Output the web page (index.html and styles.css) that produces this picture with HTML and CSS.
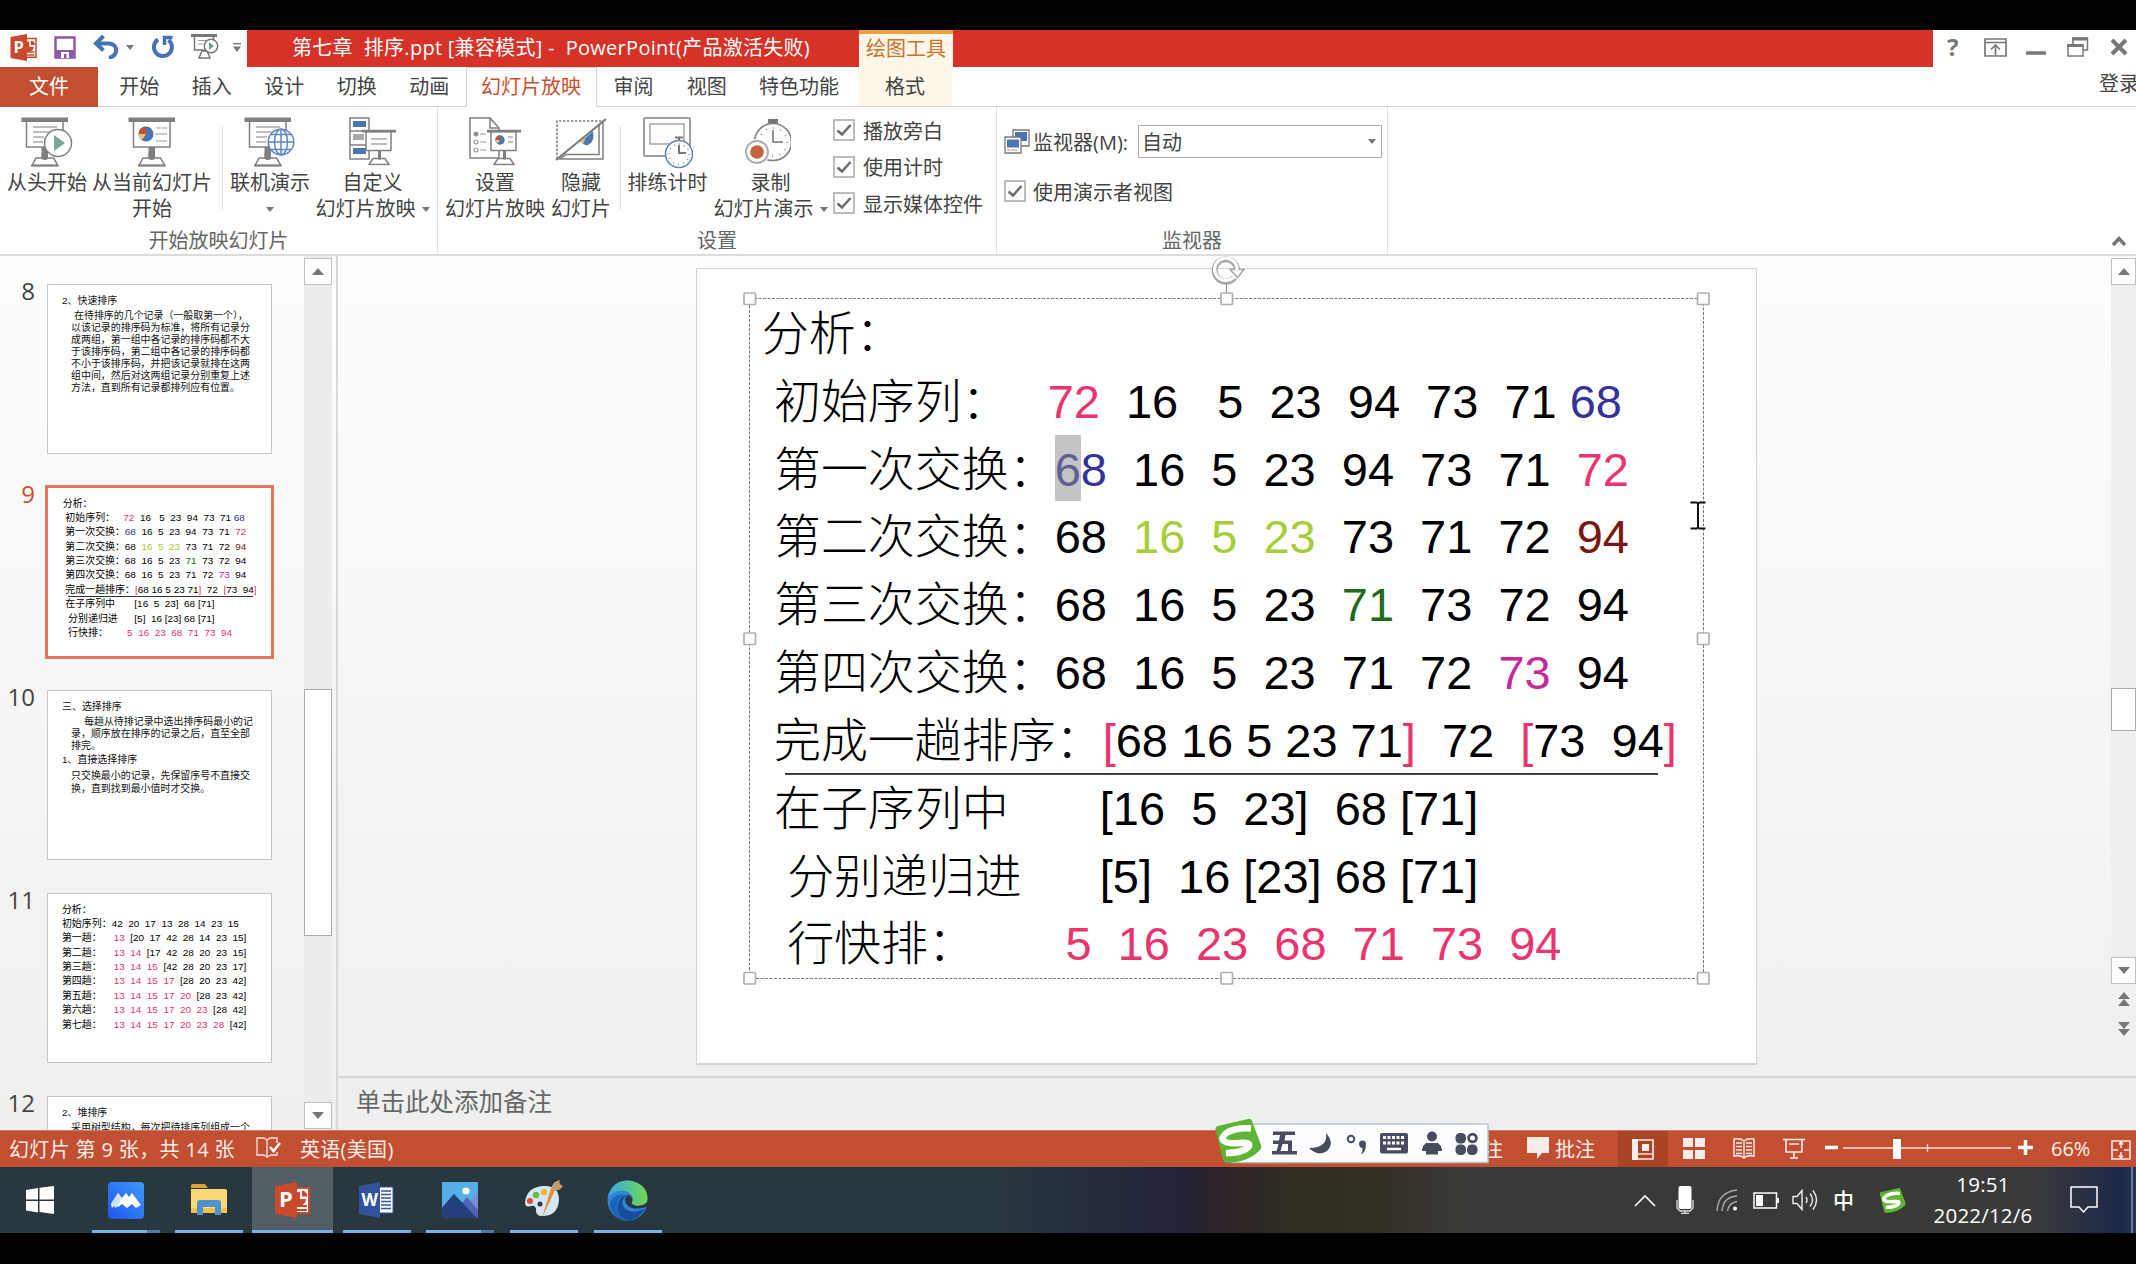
FILE: index.html
```html
<!DOCTYPE html>
<html lang="zh-CN">
<head>
<meta charset="utf-8">
<title>第七章 排序.ppt - PowerPoint</title>
<link rel="stylesheet" href="styles.css">
</head>
<body>
<svg class="defs" width="0" height="0">
  <symbol id="easel" viewBox="0 0 48 50">
    <rect x="5.500" y="4" width="36.500" height="26" fill="#fff" stroke="#808080" stroke-width="1.500"/>
    <rect x="0.500" y="0.500" width="46.500" height="4.500" fill="#808080"/>
    <path d="M20.500 30h6.500v11h-6.500z" fill="#808080"/>
    <path d="M15 41h17.500l4.500 7.500h-26z" fill="#fff" stroke="#808080" stroke-width="1.500"/>
    <path d="M10 48.500h27" stroke="#808080" stroke-width="2"/>
    <path d="M20.500 36h6.500v6q-3 2-6.500 0z" fill="#808080"/>
  </symbol>
  <symbol id="small-easel" viewBox="0 0 34 36">
    <rect x="4" y="2" width="25" height="19" fill="#fff" stroke="#808080" stroke-width="1.500"/>
    <rect x="0" y="0" width="34" height="3" fill="#808080"/>
    <path d="M16 21h3v9h-3z" fill="#808080"/>
    <path d="M11 29h12l4 6H7z" fill="#fff" stroke="#808080" stroke-width="1.500"/>
    <path d="M16 21h3v9h-3z" fill="#808080"/>
  </symbol>
  <symbol id="pie" viewBox="0 0 16 16">
    <circle cx="8" cy="8" r="7.500" fill="#4a74b4"/>
    <path d="M8 8V.5A7.500 7.500 0 0 0 .5 8z" fill="#c0502f"/>
    <path d="M8 8H.5A7.500 7.500 0 0 0 4 14z" fill="#ecc37a"/>
  </symbol>
  <symbol id="check" viewBox="0 0 22 22">
    <rect x="1" y="1" width="20" height="20" fill="#fff" stroke="#adadad" stroke-width="1.600"/>
    <path d="M4.500 11.500l4.500 4L17.500 6" fill="none" stroke="#6c6c6c" stroke-width="2.600"/>
  </symbol>
  <symbol id="sogou" viewBox="0 0 48 46">
    <path d="M4 8Q1 9 1.500 12L9 42q1 3 4 3 22-1 33-13 2-2 1-5L38 3q-1-3-4-2z" fill="#5db534"/>
    <path d="M37 10.500Q24 9 14 14q-8 5-4 9 4 3 16 2 11-1 9 3-5 7-23 7" fill="none" stroke="#fff" stroke-width="6.500"/>
  </symbol>
  <symbol id="ppt" viewBox="0 0 36 36">
    <path d="M20 6h14v25H20z" fill="#fff" stroke="#c8492b" stroke-width="2"/>
    <path d="M25 10v7h6a7 7 0 1 1-6-7z" fill="#c8492b"/><path d="M27 8.500a6 6 0 0 1 5.500 6H27z" fill="#c8492b"/>
    <path d="M21 24h11M21 28h11" stroke="#c8492b" stroke-width="1.800"/>
    <path d="M0 4L22 0v36L0 32z" fill="#c8492b"/>
    <text x="4" y="25" class="logo-letter">P</text>
  </symbol>
</svg>

<div class="screen">
  <header class="titlebar">
    <div class="qat">
      <svg width="28" height="27"><use href="#ppt" width="28" height="27"/></svg>
      <svg class="m-save" width="22" height="23" viewBox="0 0 22 23"><path d="M1.500 1.500h19v20h-19z" fill="#fff" stroke="#8a58ad" stroke-width="2.500"/><path d="M1 14h20v8H1z" fill="#8a58ad"/><path d="M7 16h8v6h-2.500v-4H10v4H7z" fill="#fff"/></svg>
      <svg class="m-undo" width="26" height="24" viewBox="0 0 26 24"><path d="M3 8.500h13q8 1 7 8-1 5-7 6.500" fill="none" stroke="#4673b3" stroke-width="4"/><path d="M10.500 1L3 8.500l7.500 7" fill="none" stroke="#4673b3" stroke-width="4"/></svg>
      <svg class="m-ar1" width="8" height="5"><path d="M0 0h8L4 5z" fill="#777"/></svg>
      <svg class="m-redo" width="24" height="24" viewBox="0 0 24 24"><path d="M7 4.500A9 9 0 1 0 17.500 5" fill="none" stroke="#4673b3" stroke-width="4"/><path d="M13.500 10V2.500h8" fill="none" stroke="#4673b3" stroke-width="3.500"/></svg>
      <svg class="m-show" width="28" height="26" viewBox="0 0 28 26"><path d="M3.500 2v14h19V2M8 24l3-7h5l3 7z" fill="#fff" stroke="#777" stroke-width="1.500"/><path d="M0 1.500h26" stroke="#777" stroke-width="3"/><path d="M7 6.500h9M7 10h5" stroke="#999"/><circle cx="20" cy="12" r="6.700" fill="#fff" stroke="#777" stroke-width="1.500"/><path d="M18 8v8l5-4z" fill="#6da287"/></svg>
      <svg class="m-ar2" width="8" height="9"><path d="M0 .7h8" stroke="#777" stroke-width="1.400"/><path d="M0 3.500h8L4 9z" fill="#777"/></svg>
    </div>
    <div class="caption">
      <span class="doc-title">第七章&nbsp; 排序.ppt [兼容模式] -&nbsp; PowerPoint(产品激活失败)</span>
      <span class="tool-tab">绘图工具</span>
    </div>
    <div class="win-controls">
      <span class="help">?</span>
      <svg class="w-rib" width="23" height="19" viewBox="0 0 23 19"><path d="M1 1h21v17H1zM1 4.500h21M11.500 18V7M7 11.500L11.500 7l4.500 4.500" fill="none" stroke="#777" stroke-width="1.700"/></svg>
      <svg class="w-min" width="20" height="4"><path d="M0 2h20" stroke="#777" stroke-width="3.500"/></svg>
      <svg class="w-res" width="22" height="20" viewBox="0 0 22 20"><path d="M6 7V1h14.500v12H16" fill="none" stroke="#777" stroke-width="1.500"/><path d="M5 2h16" stroke="#777" stroke-width="3"/><path d="M1 8h15v11H1z" fill="#fff" stroke="#777" stroke-width="1.500"/><path d="M0 8.500h16.500" stroke="#777" stroke-width="3"/></svg>
      <svg class="w-close" width="18" height="18" viewBox="0 0 18 18"><path d="M2 2l14 14M16 2L2 16" stroke="#777" stroke-width="4"/></svg>
    </div>
  </header>

  <nav class="tabs">
    <span class="tab file">文件</span><span class="tab">开始</span><span class="tab">插入</span><span class="tab">设计</span><span class="tab">切换</span><span class="tab">动画</span><span class="tab active">幻灯片放映</span><span class="tab rev">审阅</span><span class="tab">视图</span><span class="tab feat">特色功能</span><span class="tab format">格式</span>
    <span class="signin">登录</span>
  </nav>

  <section class="ribbon">
    <div class="group g-start">
      <div class="tools">
        <div class="btn b1">
          <svg width="52" height="50" viewBox="0 0 52 50"><use href="#easel" width="48" height="50"/><path d="M12 10h24M12 15h18M12 20h11M12 25h10" stroke="#aaa" stroke-width="1.500"/><circle cx="37" cy="26" r="13.500" fill="#fff" stroke="#808080" stroke-width="1.500"/><path d="M33 18v16l11-8z" fill="#7aa892"/></svg>
          <span>从头开始</span></div>
        <div class="btn b2">
          <svg width="48" height="50" viewBox="0 0 48 50"><use href="#easel" width="48" height="50"/><use href="#pie" x="10" y="9" width="16" height="16"/><path d="M28 11h5M34 11h5M27 17h12M28 24h11" stroke="#999" stroke-width="1.200"/></svg>
          <span>从当前幻灯片</span><span>开始</span></div>
        <i class="sep"></i>
        <div class="btn b3">
          <svg width="52" height="50" viewBox="0 0 52 50"><use href="#easel" width="48" height="50"/><path d="M12 10h24M12 15h18M12 20h11M12 25h10" stroke="#aaa" stroke-width="1.500"/><g fill="#fff" stroke="#5b87c4" stroke-width="1.500"><circle cx="37" cy="25" r="12.800"/><ellipse cx="37" cy="25" rx="6.500" ry="12.800"/><path d="M24 25h26M37 12v26M27 17.500h20M27 32.500h20"/></g></svg>
          <span>联机演示</span><span><b class="down"></b></span></div>
        <div class="btn b4">
          <svg width="50" height="50" viewBox="0 0 50 50"><g fill="#fff" stroke="#808080" stroke-width="1.500"><path d="M2 1h19v41H2zM2 14h19M2 28h19"/></g><path d="M5 4h13v6H5zM5 31h13v6H5z" fill="#4a78b5"/><path d="M5 17h11v6H5z" fill="#aaa"/><use href="#small-easel" x="14" y="12.500" width="34" height="36"/><path d="M23 22h16M23 27h16" stroke="#aaa" stroke-width="1.300"/></svg>
          <span>自定义</span><span>幻灯片放映<b class="down gap"></b></span></div>
      </div>
      <div class="group-name">开始放映幻灯片</div>
    </div>
    <div class="group g-setup">
      <div class="tools">
        <div class="btn b5">
          <svg width="54" height="50" viewBox="0 0 54 50"><path d="M2 1h20l9 10v30H2z" fill="#fff" stroke="#808080" stroke-width="1.500"/><path d="M22 1v10h9" fill="none" stroke="#808080" stroke-width="1.500"/><g fill="#fff" stroke="#999" stroke-width="1.200"><circle cx="8" cy="17" r="2" fill="#888"/><circle cx="8" cy="25" r="2"/><circle cx="8" cy="33" r="2"/><path d="M12 17h6M12 25h6M12 33h6"/></g><use href="#small-easel" x="19" y="12.500" width="34" height="36"/><use href="#pie" x="27" y="18" width="10" height="10"/><path d="M40 20h5M40 25h5" stroke="#aaa" stroke-width="1.300"/></svg>
          <span>设置</span><span>幻灯片放映</span></div>
        <div class="btn b6">
          <svg width="52" height="50" viewBox="0 0 52 50"><path d="M2 42V4h46" fill="none" stroke="#808080" stroke-width="1.600" stroke-dasharray="2.500 1.500"/><path d="M48 4v38H5l6-4.500h33V8" fill="none" stroke="#808080" stroke-width="1.500"/><path d="M26 25l12-11q2 11-5 14-4 1-7-3z" fill="#4a74b4"/><path d="M25 25l3-4 2 2-2 4z" fill="#ecc37a"/><path d="M1 43L51 2" stroke="#777" stroke-width="2"/></svg>
          <span>隐藏</span><span>幻灯片</span></div>
        <i class="sep"></i>
        <div class="btn b7">
          <svg width="50" height="52" viewBox="0 0 50 52"><rect x="1" y="1" width="46" height="38" rx="1" fill="#fff" stroke="#808080" stroke-width="1.500"/><rect x="7" y="7" width="34" height="20" fill="#fff" stroke="#999" stroke-width="1.300"/><circle cx="36" cy="37" r="13.500" fill="#fff" stroke="#5b87c4" stroke-width="1.600"/><circle cx="36" cy="37" r="10" fill="none" stroke="#999" stroke-width="1.500" stroke-dasharray="1 4.200"/><path d="M32 20.500h8M36 20v4M36 28v8h7" fill="none" stroke="#777" stroke-width="2"/></svg>
          <span>排练计时</span></div>
        <div class="btn b8">
          <svg width="50" height="50" viewBox="0 0 50 50"><circle cx="32" cy="25" r="18.500" fill="#fff" stroke="#808080" stroke-width="1.600"/><circle cx="32" cy="25" r="14" fill="none" stroke="#999" stroke-width="1.800" stroke-dasharray="1 6.300"/><path d="M27 4h10M32 3v4" stroke="#777" stroke-width="4"/><path d="M32 13v12h10" fill="none" stroke="#777" stroke-width="1.600"/><circle cx="16" cy="35" r="13" fill="#fff"/><circle cx="16" cy="35" r="11" fill="#fff" stroke="#aaa" stroke-width="1.800"/><circle cx="16" cy="35" r="6.800" fill="#c7623f"/></svg>
          <span>录制</span><span>幻灯片演示<b class="down gap"></b></span></div>
        <div class="checks">
          <label><svg width="22" height="22"><use href="#check"/></svg>播放旁白</label>
          <label><svg width="22" height="22"><use href="#check"/></svg>使用计时</label>
          <label><svg width="22" height="22"><use href="#check"/></svg>显示媒体控件</label>
        </div>
      </div>
      <div class="group-name">设置</div>
    </div>
    <div class="group g-mon">
      <div class="mon-body">
        <div class="mon-row">
          <svg width="26" height="25" viewBox="0 0 26 25"><g stroke="#777" stroke-width="1.300"><path d="M9 1h16v16H9z" fill="#fff"/><path d="M11 3h12v9H11z" fill="#4a74b4" stroke="none"/><path d="M1 8h16v16H1z" fill="#fff"/></g><path d="M3 10.500h12v8H3z" fill="#4a74b4"/><path d="M3 21h3" stroke="#e06c50"/><path d="M7 21h6" stroke="#999"/></svg>
          <span class="mon-label">监视器(M):</span>
          <span class="combo">自动<b class="down"></b></span>
        </div>
        <label class="mon-check"><svg width="22" height="22"><use href="#check"/></svg>使用演示者视图</label>
      </div>
      <div class="group-name">监视器</div>
    </div>
    <svg class="collapse" width="16" height="12" viewBox="0 0 16 12"><path d="M2 10l6-6.500L14 10" fill="none" stroke="#777" stroke-width="3.500"/></svg>
  </section>

  <main class="work">
    <aside class="panel">
      <div class="thumbs">
        <div class="thumb-row"><span class="num">8</span>
          <div class="thumb prose">
            <p class="t">2、快速排序</p>
            <p class="first">在待排序的几个记录（一般取第一个），</p>
            <p>以该记录的排序码为标准，将所有记录分</p><p>成两组，第一组中各记录的排序码都不大</p><p>于该排序码，第二组中各记录的排序码都</p><p>不小于该排序码，并把该记录就排在这两</p><p>组中间，然后对这两组记录分别重复上述</p><p>方法，直到所有记录都排列应有位置。</p>
          </div></div>
        <div class="thumb-row"><span class="num cur">9</span>
          <div class="thumb selected">
            <div class="slide-text">
              <div class="ln head"><span class="lb">分析：</span></div>
              <div class="ln"><span class="lb n1">初始序列：</span><span><em class="pk">72</em>  16   5  23  94  73  71 <em class="bl">68</em></span></div>
              <div class="ln"><span class="lb">第一次交换：</span><span><em class="bl">68</em>  16  5  23  94  73  71  <em class="pk">72</em></span></div>
              <div class="ln"><span class="lb">第二次交换：</span><span>68  <em class="lg">16  5  23</em>  73  71  72  <em class="dr">94</em></span></div>
              <div class="ln"><span class="lb">第三次交换：</span><span>68  16  5  23  <em class="gr">71</em>  73  72  94</span></div>
              <div class="ln"><span class="lb">第四次交换：</span><span>68  16  5  23  71  72  <em class="mg">73</em>  94</span></div>
              <div class="ln rule"><span class="lb n6">完成一趟排序：</span><span><em class="pk">[</em>68 16 5 23 71<em class="pk">]</em>  72  <em class="pk">[</em>73  94<em class="pk">]</em></span></div>
              <div class="ln"><span class="lb n7">在子序列中</span><span>[16  5  23]  68 [71]</span></div>
              <div class="ln in"><span class="lb n8">分别递归进</span><span>[5]  16 [23] 68 [71]</span></div>
              <div class="ln in"><span class="lb n9">行快排：</span><span class="pk">5  16  23  68  71  73  94</span></div>
            </div>
          </div></div>
        <div class="thumb-row"><span class="num">10</span>
          <div class="thumb prose">
            <p class="t">三、选择排序</p>
            <p class="first deep">每趟从待排记录中选出排序码最小的记</p><p>录，顺序放在排序的记录之后，直至全部</p><p>排完。</p>
            <p class="t sub">1、直接选择排序</p>
            <p class="wide">只交换最小的记录，先保留序号不直接交</p><p class="wide">换，直到找到最小值时才交换。</p>
          </div></div>
        <div class="thumb-row"><span class="num">11</span>
          <div class="thumb">
            <div class="slide-text passes">
              <div class="ln"><span class="lb">分析：</span></div>
              <div class="ln"><span class="lb p1">初始序列：</span><span>42  20  17  13  28  14  23  15</span></div>
              <div class="ln"><span class="lb">第一趟：</span><span><em class="pk">13</em>  [20  17  42  28  14  23  15]</span></div>
              <div class="ln"><span class="lb">第二趟：</span><span><em class="pk">13  14</em>  [17  42  28  20  23  15]</span></div>
              <div class="ln"><span class="lb">第三趟：</span><span><em class="pk">13  14  15</em>  [42  28  20  23  17]</span></div>
              <div class="ln"><span class="lb">第四趟：</span><span><em class="pk">13  14  15  17</em>  [28  20  23  42]</span></div>
              <div class="ln"><span class="lb">第五趟：</span><span><em class="pk">13  14  15  17  20</em>  [28  23  42]</span></div>
              <div class="ln"><span class="lb">第六趟：</span><span><em class="pk">13  14  15  17  20  23</em>  [28  42]</span></div>
              <div class="ln"><span class="lb">第七趟：</span><span><em class="pk">13  14  15  17  20  23  28</em>  [42]</span></div>
            </div>
          </div></div>
        <div class="thumb-row"><span class="num">12</span>
          <div class="thumb prose"><p class="t">2、堆排序</p><p class="first deep0">采用树型结构，每次把待排序列组成一个</p></div></div>
      </div>
      <div class="scroll left">
        <span class="sbtn"><b class="tri up"></b></span><span class="grow a"></span><span class="knob"></span><span class="grow"></span><span class="sbtn"><b class="tri"></b></span>
      </div>
    </aside>

    <div class="editor">
      <div class="canvas">
        <div class="slide">
          <div class="slide-text">
            <div class="ln head"><span class="lb">分析：</span></div>
            <div class="ln"><span class="lb n1">初始序列：</span><span><em class="pk">72</em>  16   5  23  94  73  71 <em class="bl">68</em></span></div>
            <div class="ln"><span class="lb">第一次交换：</span><span><em class="bl"><em class="sel">6</em>8</em>  16  5  23  94  73  71  <em class="pk">72</em></span></div>
            <div class="ln"><span class="lb">第二次交换：</span><span>68  <em class="lg">16  5  23</em>  73  71  72  <em class="dr">94</em></span></div>
            <div class="ln"><span class="lb">第三次交换：</span><span>68  16  5  23  <em class="gr">71</em>  73  72  94</span></div>
            <div class="ln"><span class="lb">第四次交换：</span><span>68  16  5  23  71  72  <em class="mg">73</em>  94</span></div>
            <div class="ln rule"><span class="lb n6">完成一趟排序：</span><span><em class="pk">[</em>68 16 5 23 71<em class="pk">]</em>  72  <em class="pk">[</em>73  94<em class="pk">]</em></span></div>
            <div class="ln"><span class="lb n7">在子序列中</span><span>[16  5  23]  68 [71]</span></div>
            <div class="ln in"><span class="lb n8">分别递归进</span><span>[5]  16 [23] 68 [71]</span></div>
            <div class="ln in"><span class="lb n9">行快排：</span><span class="pk">5  16  23  68  71  73  94</span></div>
          </div>
          <svg class="frame" width="1000" height="740" viewBox="0 0 1000 740">
            <path d="M19.500 48.500H973.500V728.500H19.500z" fill="none" stroke="#777" stroke-width="1" stroke-dasharray="3 1.500"/>
            <path d="M496.500 30v14" stroke="#999" stroke-width="1.300"/>
            <path d="M504.500 27.500A11.200 11.200 0 1 1 507 20" fill="none" stroke="#a8a8a8" stroke-width="6"/>
            <path d="M500 19.500h14l-6.500 8z" fill="#fff" stroke="#a8a8a8" stroke-width="1.500"/>
            <path d="M504 27A11.200 11.200 0 1 1 507 20.500" fill="none" stroke="#fff" stroke-width="3.200"/>
            <g fill="#fff" stroke="#b0b0b0" stroke-width="1.700"><rect x="14" y="43" width="11.500" height="11.500" rx="1"/><rect x="491" y="43" width="11.500" height="11.500" rx="1"/><rect x="967.500" y="43" width="11.500" height="11.500" rx="1"/><rect x="14" y="383" width="11.500" height="11.500" rx="1"/><rect x="967.500" y="383" width="11.500" height="11.500" rx="1"/><rect x="14" y="722.500" width="11.500" height="11.500" rx="1"/><rect x="491" y="722.500" width="11.500" height="11.500" rx="1"/><rect x="967.500" y="722.500" width="11.500" height="11.500" rx="1"/></g>
            <path d="M960.500 252.500h6l1.500 1 1.500-1h6M960.500 278.500h6l1.500-1 1.500 1h6M968 253v25" fill="none" stroke="#111" stroke-width="2"/>
          </svg>
        </div>
        <div class="scroll right">
          <span class="sbtn"><b class="tri up"></b></span><span class="grow r"></span><span class="knob"></span><span class="grow"></span><span class="sbtn"><b class="tri"></b></span>
          <svg class="jump" width="12" height="46" viewBox="0 0 12 46"><path d="M0 7h12L6 0zM0 14h12L6 7zM0 30h12l-6 7zM0 37h12l-6 7z" fill="#777"/></svg>
        </div>
      </div>
      <div class="notes">单击此处添加备注</div>
    </div>
  </main>

  <footer class="status">
    <span class="st-page">幻灯片 第 9 张，共 14 张</span>
    <svg class="st-book" width="25" height="22" viewBox="0 0 25 22"><path d="M11 3L8 1H1v17h7l3 2zl3-2h7v5M11 20l4-2h6v-3" fill="none" stroke="#f8e4dc" stroke-width="1.300"/><path d="M14 10l3.500 4L24 6" fill="none" stroke="#fff" stroke-width="2.500"/></svg>
    <span class="st-lang">英语(美国)</span>
    <span class="st-notes">备注</span>
    <svg class="st-bub" width="22" height="22" viewBox="0 0 22 22"><path d="M0 0h22v16H15l-5 6v-6H0z" fill="#f9ebe6"/></svg>
    <span class="st-com">批注</span>
    <span class="view-on"><svg width="22" height="21" viewBox="0 0 22 21"><path d="M1 1h20v19H1z" fill="none" stroke="#fbeee9" stroke-width="1.600"/><path d="M0 0h6v21H0zM10 5h7v7h-7z" fill="#fbeee9"/><path d="M6 15h15" stroke="#fbeee9" stroke-width="1.300"/></svg></span>
    <svg class="v2" width="22" height="21"><path d="M0 0h10v9H0zM12 0h10v9H12zM0 12h10v9H0zM12 12h10v9H12z" fill="#fbeee9"/></svg>
    <svg class="v3" width="22" height="21" viewBox="0 0 22 21"><path d="M11 3Q8 0 1 1v17q7-1 10 2 3-3 10-2V1Q14 0 11 3zV20M3 5h6M3 8.500h6M3 12h6M3 15.500h6M13 5h6M13 8.500h6M13 12h6M13 15.500h6" fill="none" stroke="#fbeee9" stroke-width="1.400"/></svg>
    <svg class="v4" width="22" height="21" viewBox="0 0 22 21"><path d="M0 1.500h22M3 1v13h16V1M6 6h10M11 14v6M7 20h8" fill="none" stroke="#fbeee9" stroke-width="1.600"/></svg>
    <svg class="zoomer" width="210" height="24" viewBox="0 0 210 24"><path d="M1 11.500h13M194 11.500h15M201.500 4v15" stroke="#fff" stroke-width="3.500"/><path d="M19 12h168M103.500 8v8" stroke="#f6ddd3" stroke-width="1.300"/><path d="M69 3h8v20h-8z" fill="#fff"/></svg>
    <span class="st-zoom">66%</span>
    <svg class="fit" width="20" height="20" viewBox="0 0 20 20"><path d="M1 1h18v18H1z" fill="none" stroke="#fbeee9" stroke-width="1.500"/><path d="M10 2v6M10 12v6M2 10h5M13 10h5M8 4.500L10 2l2 2.500M8 15.500l2 2.500 2-2.500" fill="none" stroke="#fbeee9" stroke-width="1.500"/></svg>
    <div class="ime">
      <svg width="278" height="46" viewBox="0 0 278 46">
        <rect x="18" y="6" width="256" height="38.500" fill="#fcfdff" stroke="#b7c5d3" stroke-width="1.500"/>
        <use href="#sogou" x="0" y="0" width="48" height="46"/>
        <g fill="#474c5e">
          <path d="M59 13.500h22v3.500H71.500l-1 5.500H78V33h5v3.500H58V33h4.500l2-7H59v-3.500h6l1-5.500h-7zM68.500 26l-2 7h7.500v-7z"/>
          <path d="M112 15q9 10 1 18-9 6-18-3 11 0 15-5 3-4 2-10z"/>
          <circle cx="137" cy="21" r="3.200" fill="none" stroke="#474c5e" stroke-width="2"/><path d="M145 26a3.500 3.500 0 1 1 7 0q0 8-5 10.500 2-3 1.500-6.500-3 0-3.500-4z"/>
          <rect x="166" y="15" width="28" height="20.500" rx="2"/>
          <circle cx="218" cy="18.500" r="5"/><path d="M212 25h12q4 3 4 8h-4v3.500h-12V33h-4q0-5 4-8z"/>
          <rect x="241.500" y="15" width="10.500" height="10.500" rx="4.500"/><rect x="253" y="26.500" width="10.500" height="10.500" rx="4.500"/><rect x="241.500" y="26.500" width="10.500" height="10.500" rx="4.500"/><circle cx="258.500" cy="20" r="3.900" fill="none" stroke="#474c5e" stroke-width="2.800"/>
        </g>
        <path d="M169 19.500h22M169 25h22" stroke="#fff" stroke-width="3" stroke-dasharray="3 1.500"/><path d="M173 31h14" stroke="#fff" stroke-width="2.500"/>
      </svg>
    </div>
  </footer>

  <footer class="taskbar">
    <span class="app start"><svg width="28" height="28" viewBox="0 0 28 28"><path d="M0 4l12-2v11.500H0zM13.500 1.800L28 0v13.500H13.500zM0 15h12v11.500L0 24.500zM13.500 15H28v13l-14.500-2z" fill="#fff"/></svg></span>
    <span class="app run split"><svg width="36" height="37" viewBox="0 0 36 37"><defs><linearGradient id="mt" x1="0" y1="1" x2="1" y2="0"><stop offset="0" stop-color="#1d55f5"/><stop offset="1" stop-color="#3f9af7"/></linearGradient></defs><rect width="36" height="37" rx="4" fill="url(#mt)"/><path d="M3 22L10 11l4 5 4-5 3 4 3-4 9 12-5 3-4-4-5 4-5-4-4 3-3-3-3 4z" fill="#fff"/><path d="M3 22l7-11 4 5-6 10z" fill="#cfe0fd"/></svg></span>
    <span class="app run"><svg width="36" height="32" viewBox="0 0 36 32"><path d="M0 2q0-2 2-2h12l3 4H0z" fill="#d9a33a"/><path d="M0 5h34q2 0 2 2v22H0z" fill="#f9d978"/><path d="M0 24h36v5H0z" fill="#f1c14f"/><path d="M6 31V19q0-3 3-3h18q3 0 3 3v12h-6v-8H12v8z" fill="#5191d0"/></svg></span>
    <span class="app run on"><svg width="36" height="36"><use href="#ppt" width="36" height="36"/></svg></span>
    <span class="app run"><svg width="36" height="36" viewBox="0 0 36 36"><path d="M20 5h14v26H20z" fill="#fff" stroke="#33529c"/><path d="M22 9h10M22 12.500h10M22 16h10M22 19.500h10M22 23h10M22 26.500h10" stroke="#33529c" stroke-width="1.700"/><path d="M0 4L21 0v36L0 32z" fill="#33529c"/><text x="2.500" y="24" class="logo-letter w">W</text></svg></span>
    <span class="app run split"><svg width="36" height="36" viewBox="0 0 36 36"><path d="M0 0h36v36H0z" fill="#56aee6"/><path d="M36 10v26H18z" fill="#8189d4"/><path d="M0 26l12-14 15 24H0z" fill="#264b88"/><path d="M20 21l5-6 11 13v8H22z" fill="#5263b8"/><path d="M12 12l23 24H0V26z" fill="#23407d"/><circle cx="24" cy="9" r="3.600" fill="#fdf5e6"/></svg></span>
    <span class="app run"><svg width="42" height="40" viewBox="0 0 42 40"><path d="M20 6q16-1 16 14-1 15-15 16-9 1-8-7-1-4-5-3-6 2-6-4Q4 7 20 6z" fill="#d4e6f1"/><circle cx="7" cy="21" r="3" fill="#df4b3d"/><circle cx="13" cy="15" r="3.200" fill="#6bbd45"/><circle cx="21" cy="12" r="3.200" fill="#f2b434"/><circle cx="17" cy="24" r="2.500" fill="#29373f"/><path d="M19 38l9-30 4 2z" fill="#e18d37"/><path d="M29 9q-1-7 8-9-2 4 3 6-4 6-10 4z" fill="#c49a6b"/></svg></span>
    <span class="app run"><svg width="41" height="41" viewBox="0 0 42 42"><defs><linearGradient id="eg"><stop offset="0" stop-color="#36a9e4"/><stop offset="1" stop-color="#6fda4c"/></linearGradient></defs><circle cx="21" cy="21" r="20.500" fill="#2e86d8"/><path d="M1 17Q6 0 22 .5 41 3 41.500 19q-1 9-12 8-7-1-4-5 3-5-3-9-10-6-21 4z" fill="url(#eg)"/><path d="M16 15q-8 6-4 16 6 11 18 9-17 5-25-7-5-11 2-15 4-4 9-3z" fill="#1b66bd"/><path d="M20 15q-8 8-1 15 9 5 20-1-6 12-18 12-10-3-10-14 1-11 9-12z" fill="#164d99"/><path d="M21 15q-5 5 0 11 8 6 21 1v-5l-4 3q-5 2-9 1-5-1-3-5 1-4-5-6z" fill="#28373f"/></svg></span>
    <div class="tray">
      <svg class="t1" width="22" height="13"><path d="M1 12L11 2l10 10" fill="none" stroke="#fff" stroke-width="1.600"/></svg>
      <svg class="t2" width="18" height="28" viewBox="0 0 18 28"><rect x="2.500" y="0" width="13" height="23" rx="2" fill="#fff"/><path d="M1 14v8l3 3h10l3-3v-8M9 25v3M5 27.500h8" fill="none" stroke="#ddd" stroke-width="1.300"/></svg>
      <svg class="t3" width="22" height="22" viewBox="0 0 22 22"><g fill="none" stroke="#aaa" stroke-width="1.400"><path d="M1 22Q2 3 21 1M6 22Q7 8 21 7M11.500 22q1-8 9.500-9.500"/></g><circle cx="19" cy="19.500" r="2" fill="#fff"/></svg>
      <svg class="t4" width="26" height="17" viewBox="0 0 26 17"><path d="M1 1h22.500v15H1z" fill="none" stroke="#fff" stroke-width="1.500"/><path d="M3 3h7v11H3zM24 6h2v5h-2z" fill="#fff"/></svg>
      <svg class="t5" width="26" height="22" viewBox="0 0 26 22"><g fill="none" stroke="#eee" stroke-width="1.400"><path d="M1 7.500h4l5-6v19l-5-6H1zM14 8q2 3 0 6M18 4.500q5 6.500 0 13M21 1.500q7 9.500 0 19"/></g></svg>
      <span class="t6">中</span>
      <svg class="t7" width="27" height="27"><use href="#sogou" width="27" height="27"/></svg>
      <div class="clock"><span>19:51</span><span>2022/12/6</span></div>
      <svg class="t8" width="28" height="28" viewBox="0 0 28 28"><path d="M1 1h26v20h-9l-4.500 5L9 21H1z" fill="none" stroke="#fff" stroke-width="1.500"/></svg>
      <i class="peek"></i>
    </div>
  </footer>
</div>
</body>
</html>
```
FILE: styles.css
```css
* { box-sizing: border-box; }
body { margin: 0; background: #000; font-family: "Open Sans", "Noto Sans CJK SC", sans-serif; font-size: 20px; color: #444; overflow: hidden; }
svg { display: block; flex: none; }
i, em { font-style: normal; }
p { margin: 0; }
.defs { position: absolute; }
.screen { display: flex; flex-direction: column; width: 2136px; height: 1264px; padding: 30px 0 31px; white-space: nowrap; overflow: hidden; }
.logo-letter { font: bold 22px "Open Sans", sans-serif; fill: #fff; }
.logo-letter.w { font-size: 17px; }

/* title bar */
.titlebar { display: flex; flex: none; height: 37px; background: #fff; }
.qat { display: flex; align-items: center; width: 247px; padding: 0 0 3px 10px; }
.m-save { margin-left: 16px; } .m-undo { margin-left: 17px; } .m-ar1 { margin-left: 7px; }
.m-redo { margin-left: 17px; } .m-show { margin-left: 16px; } .m-ar2 { margin-left: 14px; }
.caption { display: flex; width: 1686px; background: #d63228; color: #fff; }
.doc-title { width: 612px; padding-left: 45px; line-height: 36px; letter-spacing: .28px; }
.tool-tab { width: 94px; border-top: 4px solid #f2a03c; background: #fdf7ea; color: #c8742a; text-align: center; line-height: 30px; }
.win-controls { display: flex; align-items: center; flex: 1; padding-bottom: 3px; color: #777; }
.help { width: 16px; margin-left: 14px; font: bold 24px/34px "Noto Sans", sans-serif; }
.w-rib { margin-left: 21px; } .w-min { margin: 12px 0 0 19px; } .w-res { margin-left: 21px; } .w-close { margin-left: 21px; }

/* tabs */
.tabs { display: flex; flex: none; height: 40px; background: #fff; border-bottom: 1px solid #d2d2d2; line-height: 40px; }
.tab { flex: none; width: 72.500px; text-align: center; }
.tab.file { width: 98px; margin-right: 5px; height: 40px; background: #c24f31; color: #fff; }
.tab.active { width: 131px; height: 40px; border: 1px solid #d2d2d2; border-bottom: 0; background: #fff; color: #c9502e; line-height: 38px; }
.tab.rev { width: 74px; }
.tab.feat { width: 112px; margin-right: 3px; }
.tab.format { width: 94px; height: 39px; background: #fdf7ea; }
.signin { margin-left: auto; width: 37px; line-height: 34px; }

/* ribbon */
.ribbon { display: flex; flex: none; height: 149px; background: #fff; border-bottom: 2px solid #dcdcdc; }
.group { display: flex; flex-direction: column; flex: none; height: 146px; border-right: 1px solid #e1e1e1; }
.g-start { width: 438px; } .g-setup { width: 559px; } .g-mon { width: 391px; }
.tools { display: flex; height: 118px; padding-top: 10px; }
.group-name { height: 28px; line-height: 32px; text-align: center; color: #666; }
.btn { display: flex; flex: none; flex-direction: column; align-items: center; }
.btn svg { height: 50px; margin-bottom: 2px; }
.btn span { height: 26px; line-height: 27px; }
.b1 { width: 84px; margin-left: 5px; } .b2 { width: 126px; }
.sep { flex: none; width: 1px; height: 84px; margin: 9px 7px 0; background: #e1e1e1; }
.b3 { width: 80px; } .b4 { width: 125px; }
.b5 { width: 100px; margin-left: 7px; } .b6 { width: 60px; margin-left: 6px; }
.b6 + .sep { margin-left: 9px; margin-right: 6px; }
.b7 { width: 81px; } .b7 svg { height: 52px; margin-bottom: 0; } .b8 { width: 115px; margin-left: 5px; }
.b8 svg { margin-right: 9px; }
.down { display: inline-block; border: 4px solid transparent; border-top: 5px solid #777; border-bottom: 0; vertical-align: 4px; }
.down.gap { margin-left: 6px; }
.checks { display: flex; flex-direction: column; margin: -5px 0 0 5px; }
label { display: flex; align-items: center; height: 36.500px; gap: 8px; }
.mon-body { height: 118px; padding: 18px 0 0 7px; }
.mon-row { display: flex; align-items: center; height: 33px; }
.mon-label { width: 105px; margin-left: 3px; }
.combo { display: flex; align-items: center; justify-content: space-between; width: 244px; height: 33px; padding: 0 5px 0 3px; border: 1px solid #ababab; }
.mon-check { margin-top: 15px; gap: 7px; }
.collapse { margin: 128px 9px 0 auto; }

/* work area */
.work { display: flex; flex: 1; min-height: 0; background: linear-gradient(#fdfdfd, #efefef); }
.panel { display: flex; width: 338px; border-right: 2px solid #d8d8d8; }
.thumbs { width: 304px; padding-top: 28px; overflow: hidden; }
.thumb-row { display: flex; height: 203px; }
.num { width: 35px; margin-right: 12px; text-align: right; font-size: 24px; line-height: 14px; }
.num.cur { color: #c9502e; }
.thumb { width: 225px; height: 170px; background: #fff; border: 1px solid #c6c6c6; color: #111; }
.thumb { font-size: 9.950px; overflow: hidden; }
.thumb.selected { border-color: #fff; outline: 3px solid #e0775a; outline-offset: -1px; }
.prose { padding: 10px 0 0 23px; font-family: "Liberation Sans", "Noto Sans CJK SC", sans-serif; line-height: 12px; }
.prose .t { margin-left: -9px; height: 14.500px; }
.prose .first { margin-left: 3px; } .prose .first.deep { margin-left: 13px; } .prose .first.deep0 { margin-left: 0; }
.prose .sub { margin-top: 2.500px; } .prose .wide { line-height: 13px; }

.slide-text { padding: .660em 0 0 1.640em; font-family: "Liberation Sans", "Noto Sans CJK SC", sans-serif; font-weight: 300; color: #000; }
.ln { display: flex; height: 1.445em; line-height: 1.445em; }
.ln span { flex: none; white-space: pre; }
.ln.head { margin-left: -.260em; }
.lb { width: 5.980em; }
.lb.n1 { width: 5.830em; } .lb.n6 { width: 7em; } .lb.n7 { width: 6.940em; } .lb.n8 { width: 6.660em; } .lb.n9 { width: 5.930em; }
.ln.in { padding-left: .280em; }
.rule { background: linear-gradient(#333, #333) .240em 100% / 18.600em .040em no-repeat; }
.thumb .rule { background-size: 18.600em 1px; }
.thumb .slide-text { padding-top: .860em; padding-left: 1.740em; font-weight: 400; }
.thumb .slide-text.passes { padding-left: 1.400em; } .passes .lb { width: 5.200em; } .passes .lb.p1 { width: 5em; }
.pk { color: #ea346e; } .bl { color: #333399; } .lg { color: #a6ce39; } .dr { color: #7a1710; } .gr { color: #226b1b; } .mg { color: #c52a98; }
.sel { background: linear-gradient(#c4c4c4, #c4c4c4); padding: 8px 0 5px; color: #605f94; }

.scroll { display: flex; flex-direction: column; width: 28px; background: #ececec; }
.scroll.left { padding: 2px 0 1px; }
.sbtn { display: flex; flex: none; align-items: center; justify-content: center; height: 27px; background: #fff; border: 1px solid #c0c0c0; }
.tri { border: 6px solid transparent; border-top: 7px solid #777; border-bottom: 0; }
.tri.up { border-top: 0; border-bottom: 7px solid #777; }
.grow { flex: 1; }
.grow.a { flex: none; height: 404px; }
.grow.r { flex: none; height: 403px; }
.knob { flex: none; height: 247px; background: #fff; border: 1px solid #ababab; }

.editor { display: flex; flex-direction: column; flex: 1; }
.canvas { display: flex; justify-content: space-between; height: 820px; padding-left: 358px; }
.slide { position: relative; width: 1061px; height: 797px; margin-top: 12px; background: #fff; border: 1.500px solid #d4d4d4; border-bottom-width: 2px; font-size: 46.950px; }
.frame { position: absolute; left: 33px; top: -19px; }
.scroll.right { width: 25px; padding-top: 2px; background: transparent; }
.right .grow { background: #efefef; }
.right .knob { height: 43px; }
.jump { margin: 8px 0 38px 7px; }
.notes { flex: 1; padding-left: 18px; border-top: 2px solid #d6d6d6; background: #efefef; color: #666; font-size: 24.500px; line-height: 48px; }

/* status bar */
.status { position: relative; display: flex; align-items: center; flex: none; height: 37px; padding-bottom: 2px; background: #c24f31; border-top: 1px solid #d07a62; color: #fbeee9; }
.st-page { flex: none; width: 256px; padding-left: 9px; letter-spacing: .35px; }
.st-lang { flex: none; width: 1141px; margin-left: 19px; letter-spacing: .3px; }
.st-notes { width: 40px; margin-left: 22px; } .st-bub { margin: 0 0 0 24px; } .st-com { width: 40px; margin-left: 6px; }
.view-on { display: flex; align-items: center; justify-content: center; width: 50px; height: 36px; margin: 2px 0 0 23px; background: #a94427; }
.v2 { margin-left: 15px; } .v3 { margin-left: 28px; } .v4 { margin-left: 28px; } .zoomer { margin-left: 19px; }
.st-zoom { width: 44px; margin-left: 17px; } .fit { margin: 4px 0 0 16px; }
.ime { position: absolute; left: 1214px; top: -13px; z-index: 2; }

/* taskbar */
.taskbar { display: flex; flex: none; height: 66px; background: linear-gradient(90deg, #29373f 0, #28363f 1000px, #22233a 1180px, #2c2229 1215px, #302d22 1290px, #332f25 1380px, #393836 1460px, #3a3a3a 2030px, #1d2949 2120px, #203458 2136px); }
.app { display: flex; flex: none; align-items: center; justify-content: center; width: 68px; height: 66px; margin-left: 15.700px; }
.app.start { width: 76px; margin-left: 0; padding-left: 4px; }
.run { border-bottom: 3px solid #76b1e8; padding-top: 3px; }
.app.on { width: 81px; margin: 0 -6.500px 0 9px; background: #535e64; }
.split { border-image: linear-gradient(90deg, #76b1e8 78%, #4f7ba6 78%) 3; border-top: 0; border-left: 0; border-right: 0; }
.tray { display: flex; align-items: center; margin-left: auto; width: 502px; color: #fff; }
.t2 { margin-left: 20px; } .t3 { margin-left: 22px; } .t4 { margin-left: 15px; } .t5 { margin-left: 13px; }
.t6 { width: 22px; margin-left: 15px; font-weight: 500; font-size: 21px; line-height: 62px; } .t7 { margin-left: 24px; }
.clock { display: flex; flex-direction: column; align-items: center; width: 106px; margin-left: 24px; line-height: 31px; font-size: 20.500px; letter-spacing: .2px; }
.t8 { margin-left: 34px; } .peek { width: 2px; height: 66px; margin-left: auto; margin-right: 3px; background: #6c7b92; }
```
